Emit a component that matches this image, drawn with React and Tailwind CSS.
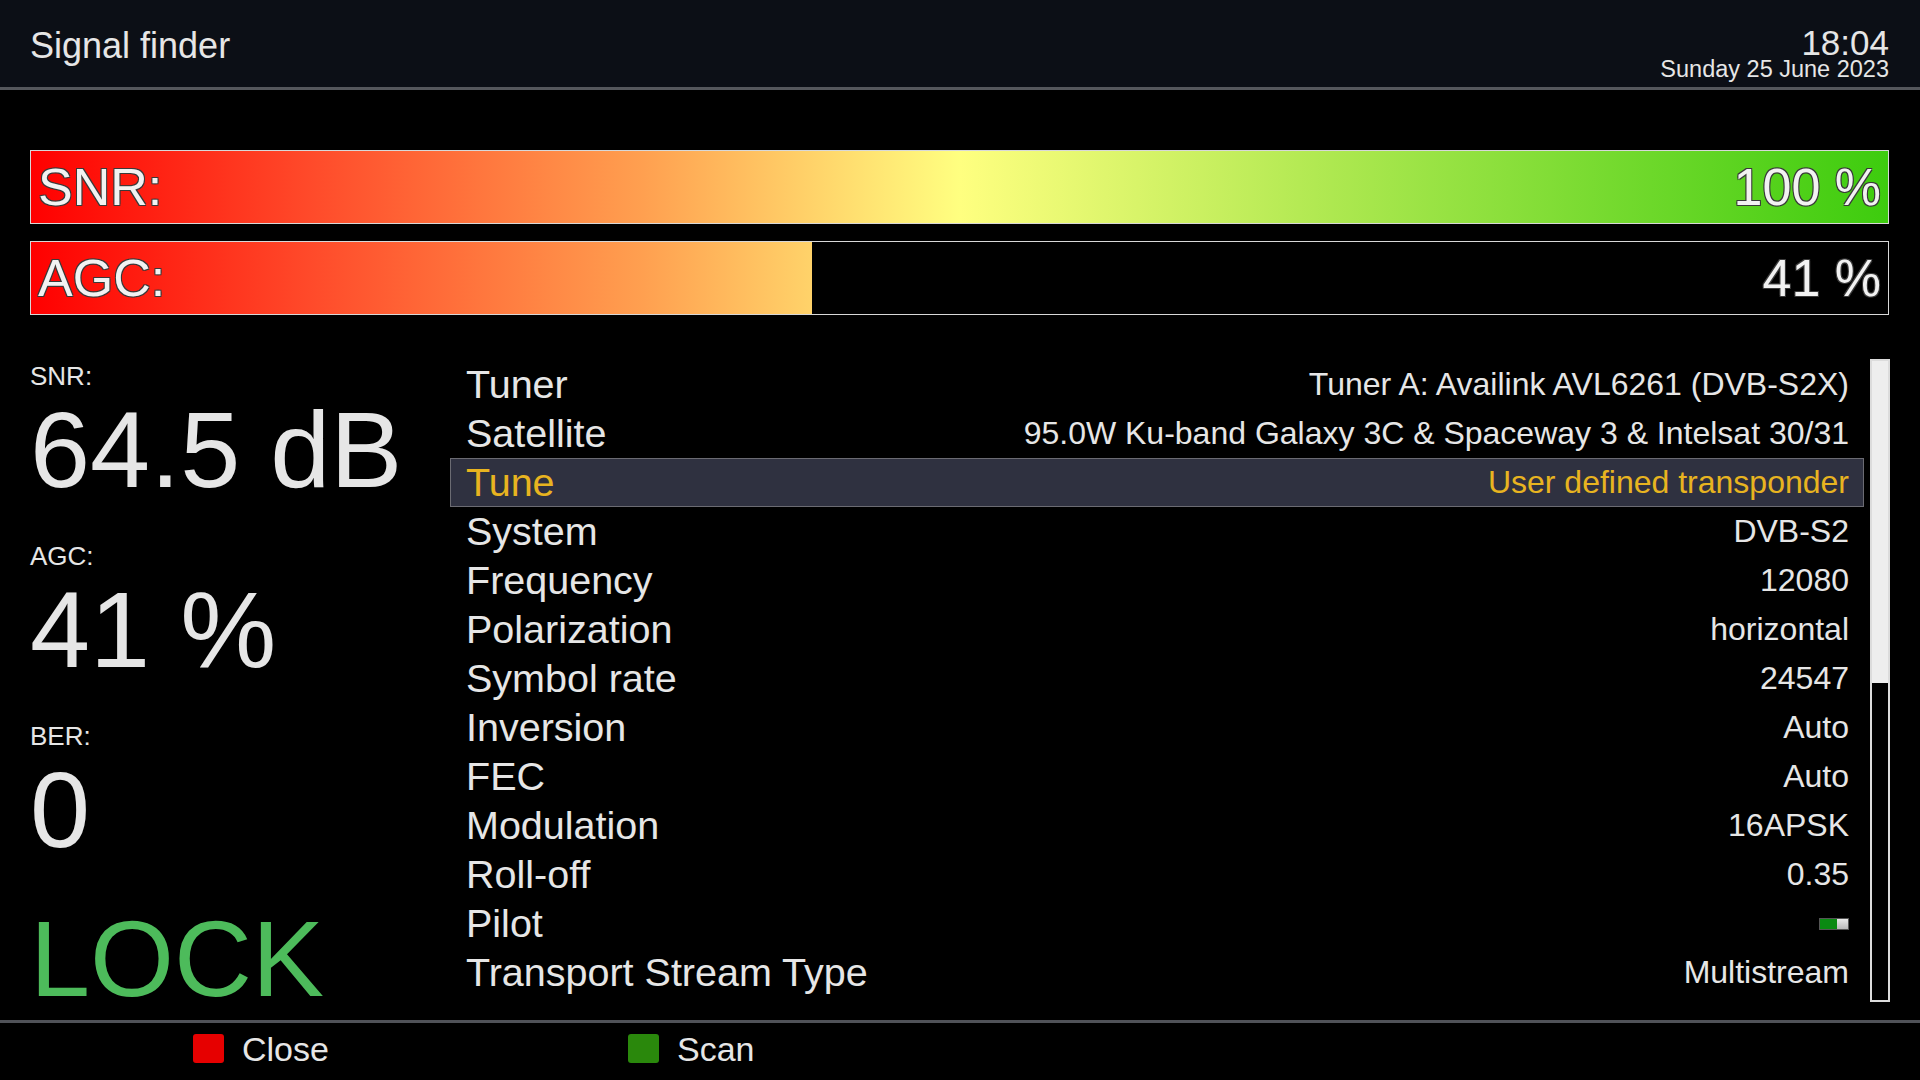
import React from 'react'

const rows = [
  ['Tuner', 'Tuner A: Availink AVL6261 (DVB-S2X)'],
  ['Satellite', '95.0W Ku-band Galaxy 3C & Spaceway 3 & Intelsat 30/31'],
  ['Tune', 'User defined transponder'],
  ['System', 'DVB-S2'],
  ['Frequency', '12080'],
  ['Polarization', 'horizontal'],
  ['Symbol rate', '24547'],
  ['Inversion', 'Auto'],
  ['FEC', 'Auto'],
  ['Modulation', '16APSK'],
  ['Roll-off', '0.35'],
  ['Pilot', null],
  ['Transport Stream Type', 'Multistream'],
]

const outline = '[text-shadow:1px_1px_0_#3a3a3a,-1px_-1px_0_#3a3a3a,1px_-1px_0_#3a3a3a,-1px_1px_0_#3a3a3a]'

function Bar({ label, value, fill }){
  return (
    <div className="relative h-[74px] border border-[#d8d8d8] bg-black">
      <div
        className="h-full bg-[linear-gradient(to_right,#ff0000_0%,#ff4a2a_15%,#ffa050_33%,#ffff80_50%,#aee850_70%,#3dcc0e_100%)] bg-[length:1857px_100%] bg-no-repeat"
        style={{ width: `${fill}px` }}
      />
      <div className={`absolute inset-0 flex items-center justify-between px-[7px] text-[52px] leading-none text-[#f2f2f2] ${outline}`}>
        <span>{label}</span>
        <span>{value}</span>
      </div>
    </div>
  )
}

function Stat({ label, value, first }){
  return (
    <div className={first ? 'mt-[2px]' : 'mt-[37px]'}>
      <div className="text-[26px] leading-[30px]">{label}</div>
      <div className="mt-[5px] text-[108px] leading-[108px]">{value}</div>
    </div>
  )
}

export default function App(){
  return (
    <div className="w-[1920px] h-[1080px] bg-black text-[#e6e6e6] flex flex-col overflow-hidden" style={{ fontFamily: '"Liberation Sans", Arial, sans-serif' }}>
      <header className="h-[90px] shrink-0 bg-[#0c0f16] border-b-[3px] border-[#55575c] flex justify-between pl-[30px] pr-[31px]">
        <div className="mt-[28px] text-[36px] leading-none">Signal finder</div>
        <div className="flex flex-col items-end">
          <div className="mt-[27px] text-[35px] leading-[32px]">18:04</div>
          <div className="text-[23.5px] leading-[21px]">Sunday 25 June 2023</div>
        </div>
      </header>

      <main className="flex-1 flex flex-col">
        <div className="mt-[60px] pl-[30px] pr-[31px] flex flex-col gap-[17px]">
          <Bar label="SNR:" value="100 %" fill={1857} />
          <Bar label="AGC:" value="41 %" fill={781} />
        </div>

        <div className="mt-[44px] flex pr-[30px]">
          <div className="w-[450px] pl-[30px] flex flex-col">
            <Stat label="SNR:" value="64.5 dB" first />
            <Stat label="AGC:" value="41 %" />
            <Stat label="BER:" value="0" />
            <div className="mt-[41px] text-[108px] leading-[108px] text-[#4dbb5b]">LOCK</div>
          </div>

          <div className="flex-1 pt-[1px]">
            {rows.map(([k, v]) => {
              const sel = k === 'Tune'
              return (
                <div
                  key={k}
                  className={`h-[49px] flex items-center justify-between pl-[15px] pr-[14px] border ${sel ? 'bg-[#2f3140] border-[#6b6b72] text-[#e8b420]' : 'border-transparent'}`}
                >
                  <span className="text-[39.5px] leading-[49px]">{k}</span>
                  {v === null ? (
                    <span className="flex h-[12px] w-[30px] border border-[#555]">
                      <span className="w-[17px] h-full bg-[#0a8a12]" />
                      <span className="flex-1 h-full bg-[linear-gradient(to_bottom,#e8e8e8,#b8b8b8)]" />
                    </span>
                  ) : (
                    <span className="text-[32px] leading-[49px]">{v}</span>
                  )}
                </div>
              )
            })}
          </div>

          <div className="ml-[6px] w-[20px] h-[643px] border-2 border-[#dcdcdc]">
            <div className="h-[322px] bg-[#eeeeee]" />
          </div>
        </div>
      </main>

      <footer className="h-[60px] shrink-0 border-t-[3px] border-[#505258] flex items-start pt-[11px]">
        <div className="ml-[193px] w-[435px] flex items-start">
          <span className="w-[31px] h-[29px] rounded-[3px] bg-[#e60000]" />
          <span className="ml-[18px] mt-[-2px] text-[34px] leading-none">Close</span>
        </div>
        <div className="flex items-start">
          <span className="w-[31px] h-[29px] rounded-[3px] bg-[#2a880c]" />
          <span className="ml-[18px] mt-[-2px] text-[34px] leading-none">Scan</span>
        </div>
      </footer>
    </div>
  )
}
